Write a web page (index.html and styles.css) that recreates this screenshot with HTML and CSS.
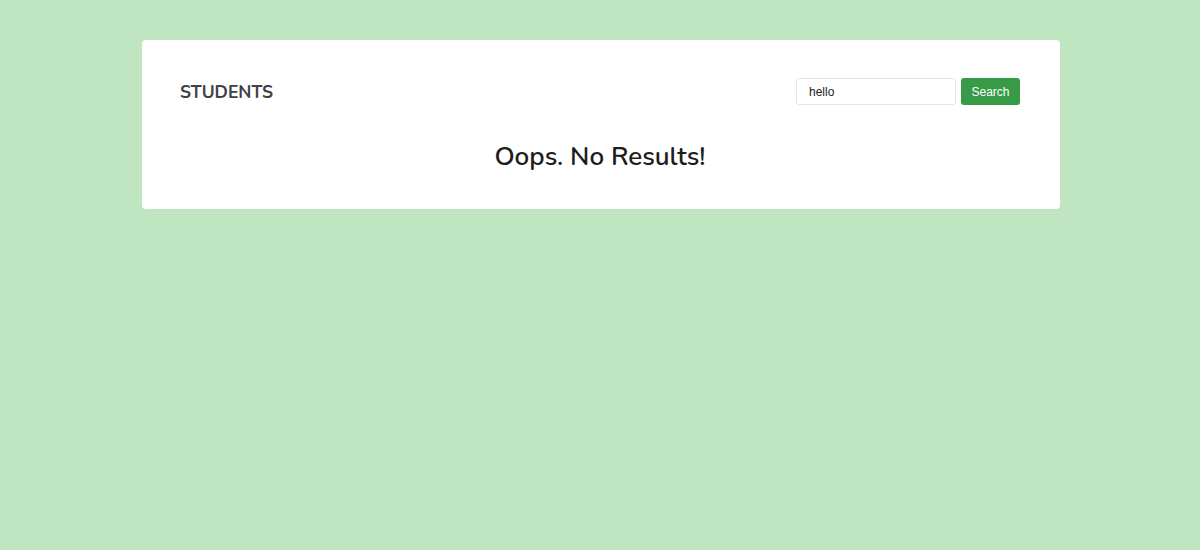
FILE: index.html
```html
<!DOCTYPE html>
<html>
<head>
<meta charset="utf-8">
<link rel="stylesheet" href="styles.css">
</head>
<body>
<div class="card">
  <div class="top">
    <div class="title">STUDENTS</div>
    <form class="search">
      <input class="search-input" type="text" value="hello">
      <button class="search-btn" type="button">Search</button>
    </form>
  </div>
  <h1 class="empty">Oops. No Results!</h1>
</div>
</body>
</html>
```
FILE: styles.css
```css
html, body {
  margin: 0;
  padding: 0;
  background: #bfe6c0;
  height: 100%;
}
body {
  padding-top: 40px;
  box-sizing: border-box;
  font-family: "Nunito", "Open Sans", sans-serif;
}
.card {
  width: 918px;
  margin: 0 0 0 142px;
  background: #ffffff;
  border-radius: 4px;
  box-sizing: border-box;
  padding: 38px 40px 38px 38px;
  height: 169px;
}
.top {
  display: flex;
  justify-content: space-between;
  align-items: center;
  height: 27px;
}
.title {
  font-size: 17.5px;
  font-weight: 700;
  color: #404048;
}
.search {
  display: flex;
  gap: 5px;
  margin: 0;
}
.search-input {
  width: 160px;
  height: 27px;
  box-sizing: border-box;
  border: 1px solid #e6e6e6;
  border-radius: 3px;
  padding: 0 12px;
  font-family: "Liberation Sans", Arial, sans-serif;
  font-size: 12px;
  color: #222;
  outline: none;
}
.search-btn {
  width: 59px;
  height: 27px;
  border: none;
  border-radius: 3px;
  background: #379a46;
  color: #fff;
  font-family: "Liberation Sans", Arial, sans-serif;
  font-size: 12px;
  padding: 0;
}
.empty {
  margin: 37px 0 0;
  text-align: center;
  font-size: 26px;
  font-weight: 600;
  color: #1d1d1d;
  line-height: 30px;
}
```
